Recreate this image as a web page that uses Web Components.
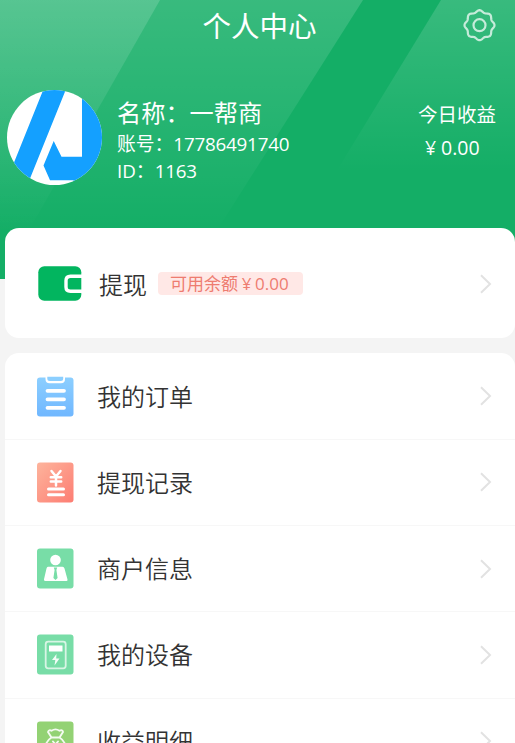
<!DOCTYPE html>
<html lang="zh-CN">
<head>
<meta charset="utf-8">
<title>个人中心</title>
<style>
html,body{margin:0;height:743px;overflow:hidden;background:#f4f4f4}
body{font-family:"Open Sans","Noto Sans CJK SC",sans-serif}
</style>
</head>
<body>
<user-center></user-center>
<script>
function define(name, html, setup) {
  const t = document.createElement('template');
  t.innerHTML = html;
  customElements.define(name, class extends HTMLElement {
    constructor() {
      super();
      const root = this.attachShadow({mode: 'open'});
      root.appendChild(t.content.cloneNode(true));
      if (setup) setup(root);
    }
  });
}

// Eight-lobed outline round a small ring.
define('gear-icon', `<style>:host{display:block;width:34px;height:34px}svg{display:block}</style>
<svg width="34" height="34" viewBox="-16.500 -16.200 34 34" fill="none" stroke="#fff" stroke-opacity=".72" stroke-width="2.200" stroke-linejoin="round"><circle r="6"/><path/></svg>`, root => {
  let d = '';
  for (let i = 0; i < 120; i++) {
    const a = i / 120 * Math.PI * 2, r = 14 + Math.cos(a * 8) * 1;
    d += (i ? 'L' : 'M') + (Math.cos(a) * r).toFixed(2) + ' ' + (Math.sin(a) * r).toFixed(2);
  }
  root.querySelector('path').setAttribute('d', d + 'Z');
});

define('user-avatar', `<style>:host{display:block;width:95px;height:95px;border-radius:50%;overflow:hidden;background:#fff}svg{display:block}</style>
<svg width="95" height="95" viewBox="7 90.500 95 95"><g fill="#14a0ff"><path d="M45 86H67.500L28 184H4L14 163Z"/><path d="M82 86H104V188H85L73 180.700H50L43.500 166L53.700 141.500L61.500 157.300H82Z"/></g></svg>`);

define('chevron-icon', `<style>:host{display:block;width:14px;height:22px}svg{display:block}</style>
<svg width="14" height="22" fill="none" stroke="#e2e2e2" stroke-width="2"><path d="M2 2.200L11 11L2 19.800"/></svg>`);

define('top-bar', `<style>
:host{display:grid;grid-template-columns:1fr auto 1fr;align-items:center;height:51px;padding:0 18px 0 22px;box-sizing:border-box;color:#fff}
h1{grid-column:2;margin:0;font-size:28.500px;font-weight:400;line-height:40px}
gear-icon{justify-self:end}
</style><h1><slot></slot></h1><gear-icon></gear-icon>`);

define('user-profile', `<style>
:host{display:flex;height:95px;margin-top:39px;padding-left:7px;color:#fff}
.info{margin-left:15px;padding-top:8px;flex:1;white-space:nowrap}
.name{font-size:24.200px;line-height:30px}
.line{font-size:18.800px;line-height:27px;height:27px}
.num{letter-spacing:-.200px}
.line.first{margin-top:3px}
.income{width:97px;font-size:19.500px;line-height:33px;padding-top:8px;white-space:nowrap}
.money{padding-left:7px}
.yen{display:inline-block;width:16px}
</style>
<user-avatar></user-avatar>
<div class="info"><div class="name">名称：一帮商</div><div class="line first">账号：<span class="num">17786491740</span></div><div class="line">ID：<span class="num">1163</span></div></div>
<div class="income"><div>今日收益</div><div class="money"><span class="yen">¥</span>0.00</div></div>`);

define('page-header', `<style>
:host{display:block;height:279px;background:#14ae66;position:relative}
.rays{position:absolute;inset:0}
.content{position:relative}
</style>
<svg class="rays" width="515" height="279"><defs>
<linearGradient id="a" gradientUnits="userSpaceOnUse" x1="0" y1="0" x2="0" y2="232"><stop stop-color="#fff" stop-opacity=".155"/><stop offset="1" stop-color="#fff" stop-opacity="0"/></linearGradient>
<linearGradient id="b" gradientUnits="userSpaceOnUse" x1="0" y1="0" x2="0" y2="172"><stop stop-color="#fff" stop-opacity=".155"/><stop offset="1" stop-color="#fff" stop-opacity="0"/></linearGradient></defs>
<path d="M0 0H160L28 232H0Z" fill="url(#a)"/><path d="M0 0H363L216 232H0Z" fill="url(#a)"/><path d="M441 0H515V172H336Z" fill="url(#b)"/></svg>
<div class="content"><slot></slot></div>`);

define('wallet-icon', `<style>:host{display:block;width:44px;height:35px}svg{display:block}</style>
<svg width="44" height="35"><rect x=".300" y=".300" width="43" height="34.400" rx="6" fill="#02b55f"/><path d="M44 10.200H32.500Q28 10.200 28 14.500V21Q28 25.200 32.500 25.200H44" fill="none" stroke="#fff" stroke-width="3.400"/></svg>`);

define('balance-card', `<style>
:host{display:flex;align-items:center;height:110px;box-sizing:border-box;padding:1px 22px 0 33px;background:#fff;border-radius:14px}
.t{margin-left:17px;font-size:24px;font-weight:350;color:#333;line-height:36px;padding-top:2px}
.tag{margin-left:11px;width:145px;height:23px;border-radius:4px;background:#ffe8e6;color:#ee7c70;font-size:17px;line-height:24px;box-sizing:border-box;padding-left:12px;white-space:nowrap}
.yen{display:inline-block;width:17px;text-align:center}
chevron-icon{margin-left:auto}
</style><wallet-icon></wallet-icon><span class="t">提现</span><span class="tag">可用余额<span class="yen">¥</span>0.00</span><chevron-icon></chevron-icon>`);

define('menu-row', `<style>
:host{display:flex;align-items:center;height:86.250px;box-sizing:border-box;padding:0 22px 0 32px;border-bottom:1px solid #f7f7f7}
.t{margin-left:23px;font-size:24px;font-weight:350;color:#333;line-height:36px;padding-top:1px}
chevron-icon{margin-left:auto}
::slotted(svg){display:block;width:37px;height:41px}
</style><slot name="icon"></slot><span class="t"><slot></slot></span><chevron-icon></chevron-icon>`);

define('menu-card', `<style>:host{display:block;margin-top:15px;background:#fff;border-radius:14px;padding-top:.500px}</style><slot></slot>`);

define('user-center', `<style>
:host{display:block;height:743px;overflow:hidden}
main{margin:-51px .500px 0 5px;position:relative}
</style>
<page-header><top-bar>个人中心</top-bar><user-profile></user-profile></page-header>
<main>
<balance-card></balance-card>
<menu-card>
<menu-row><svg slot="icon" viewBox="0 0 37 41"><defs><linearGradient id="c" x2="0" y2="1"><stop stop-color="#8ccfff"/><stop offset="1" stop-color="#70b7ff"/></linearGradient></defs><rect y="1.500" width="36.500" height="39" rx="3" fill="url(#c)"/><path d="M8.500 0V3Q8.500 7.300 12.500 7.300H24Q28 7.300 28 3V0Z" fill="#fff"/><path d="M10.300 .800H26.200V2.500Q26.200 5 23.700 5H12.800Q10.300 5 10.300 2.500Z" fill="#8ccfff"/><path d="M10.500 14.800H27M10.500 23.300H27M10.500 31.800H27" stroke="#fff" stroke-width="3.800" stroke-linecap="round"/></svg>我的订单</menu-row>
<menu-row><svg slot="icon" viewBox="0 0 37 41"><defs><linearGradient id="d" x2="1" y2="1"><stop stop-color="#fdb49c"/><stop offset="1" stop-color="#fd7d73"/></linearGradient></defs><rect y=".500" width="36.500" height="40" rx="3" fill="url(#d)"/><g fill="none" stroke="#fff" stroke-linecap="round"><path d="M14.500 9L19 14.500L23.500 9M19 14.500V23.500M13.800 15.200H24.200M13.800 19.600H24.200" stroke-width="2.500"/><path d="M11.500 27H26.500M11.500 32.700H26.500" stroke-width="3"/></g></svg>提现记录</menu-row>
<menu-row><svg slot="icon" viewBox="0 0 37 41"><rect y=".500" width="36.500" height="40" rx="3" fill="#78dda7"/><circle cx="18.500" cy="12" r="5.300" fill="#fff"/><path d="M11 18.800H25.500Q27 18.800 27.500 20.500L30.500 31.500Q30.800 33 29.300 33H8.300Q6.500 33 7 31.300L9.500 20.500Q9.900 18.800 11 18.800Z" fill="#fff"/><path d="M16.800 19.500H20.200L19.400 22L20.600 30L18.500 32L16.400 30L17.600 22Z" fill="#78dda7"/></svg>商户信息</menu-row>
<menu-row><svg slot="icon" viewBox="0 0 37 41"><rect y=".500" width="36.500" height="40" rx="3" fill="#78dda7"/><rect x="8.700" y="7.700" width="20" height="26.600" rx="2.500" fill="none" stroke="#d8f5e5" stroke-width="1.800"/><path d="M12 11.500H25.500V17.500H12Z" fill="#fff"/><path d="M19.500 20L15 26H18.300L17.500 31.500L22.500 24.500H19.200Z" fill="#f4fdf8"/></svg>我的设备</menu-row>
<menu-row><svg slot="icon" viewBox="0 0 37 41"><rect y=".500" width="36.500" height="40" rx="3" fill="#93d274"/><g fill="none" stroke="#fff" stroke-opacity=".9" stroke-width="1.900" stroke-linejoin="round" stroke-linecap="round"><path d="M14.500 16.500L11 11Q12 8.500 14.500 9.700Q18.500 7 22.500 9.700Q25.500 8.500 26 11L22.500 16.500ZM14.500 16.500Q8.500 20 8 28Q8 33 13 33H24Q29 33 29 28Q28.500 20 22.500 16.500"/><path d="M16 20.500L18.500 23.500L21 20.500M18.500 23.500V29M15.500 25H21.500"/></g></svg>收益明细</menu-row>
</menu-card>
</main>`);
</script>
</body>
</html>
